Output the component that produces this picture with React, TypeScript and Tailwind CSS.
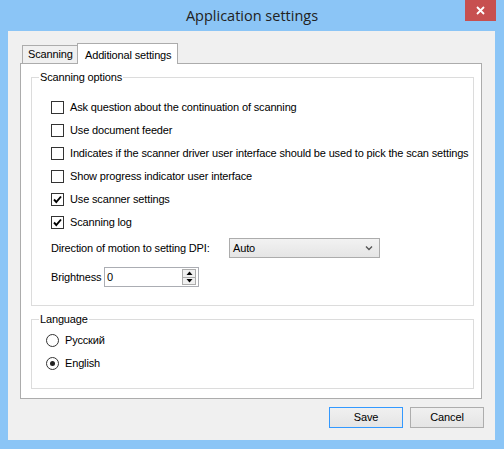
import React from "react";

function Check({ checked }: { checked?: boolean }) {
  return (
    <div className="w-[13px] h-[13px] border border-[#333333] bg-white flex items-center justify-center shrink-0">
      {checked && (
        <svg width="11" height="11" viewBox="0 0 11 11">
          <polyline points="2,5.5 4.3,8 9,2.5" fill="none" stroke="#000" strokeWidth="1.9" />
        </svg>
      )}
    </div>
  );
}

function Radio({ checked }: { checked?: boolean }) {
  return (
    <div className="w-[13px] h-[13px] rounded-full border border-[#333333] bg-white flex items-center justify-center shrink-0">
      {checked && <div className="w-[5px] h-[5px] rounded-full bg-[#222]" />}
    </div>
  );
}

function CheckRow({ label, checked }: { label: string; checked?: boolean }) {
  return (
    <div className="h-[23px] flex items-center gap-[6px]">
      <Check checked={checked} />
      <span className="whitespace-nowrap">{label}</span>
    </div>
  );
}

export default function App() {
  return (
    <div className="w-[504px] h-[449px] bg-[#8bc5f6] flex flex-col font-['Liberation_Sans',Arial,sans-serif] text-[11px] tracking-[-0.15px] text-black">
      <div className="h-[31px] relative flex items-center justify-center">
        <span className="font-['Open_Sans','Noto_Sans',sans-serif] text-[14.5px] tracking-normal text-[#222] mt-[1px]">Application settings</span>
        <div className="absolute right-[8px] top-0 w-[31px] h-[21px] bg-[#c75050] flex items-center justify-center">
          <svg width="9" height="9" viewBox="0 0 9 9">
            <path d="M1 1 L8 8 M8 1 L1 8" stroke="#fff" strokeWidth="1.8" />
          </svg>
        </div>
      </div>
      <div className="ml-[8px] w-[487px] h-[409px] bg-[#f0f0f0] flex flex-col">
        <div className="pt-[12px] pl-[12px] flex flex-col">
          <div className="flex items-end ml-[2px]">
            <div className="w-[56px] h-[18px] mt-[2px] border border-b-0 border-[#acacac] bg-[#f0f0f0] flex items-center pl-[5px]">
              Scanning
            </div>
            <div className="relative z-10 -ml-px -mb-px w-[101px] h-[21px] border border-b-0 border-[#acacac] bg-white flex items-start pt-[3px] pl-[7px]">
              Additional settings
            </div>
          </div>
          <div className="w-[462px] h-[336px] border border-[#acacac] bg-white flex flex-col">
            <div className="relative ml-[10px] mt-[13px] w-[443px] h-[229px] border border-[#dcdcdc] flex flex-col pl-[19px] pt-[18px]">
              <span className="absolute left-[7px] top-[-7px] bg-white px-px leading-[13px]">Scanning options</span>
              <CheckRow label="Ask question about the continuation of scanning" />
              <CheckRow label="Use document feeder" />
              <CheckRow label="Indicates if the scanner driver user interface should be used to pick the scan settings" />
              <CheckRow label="Show progress indicator user interface" />
              <CheckRow label="Use scanner settings" checked />
              <CheckRow label="Scanning log" checked />
              <div className="mt-[4px] h-[20px] flex items-center">
                <span className="w-[178px] whitespace-nowrap">Direction of motion to setting DPI:</span>
                <div className="w-[151px] h-[20px] border border-[#acacac] bg-gradient-to-b from-[#f2f2f2] to-[#e5e5e5] flex items-center justify-between pl-[3px] pr-[6px]">
                  <span>Auto</span>
                  <svg width="8" height="6" viewBox="0 0 8 6">
                    <polyline points="1,1.5 4,4.5 7,1.5" fill="none" stroke="#555" strokeWidth="1.4" />
                  </svg>
                </div>
              </div>
              <div className="mt-[9px] h-[20px] flex items-center">
                <span className="w-[53px] whitespace-nowrap">Brightness</span>
                <div className="w-[95px] h-[20px] border border-[#abadb3] bg-white flex items-center justify-between pl-[2px] pr-[2px]">
                  <span>0</span>
                  <div className="w-[14px] h-[16px] border border-[#acacac] bg-[#f0f0f0] flex flex-col">
                    <div className="flex-1 flex items-center justify-center border-b border-[#acacac]">
                      <svg width="7" height="4" viewBox="0 0 7 4"><polygon points="0.5,4 3.5,0.5 6.5,4" fill="#000" /></svg>
                    </div>
                    <div className="flex-1 flex items-center justify-center">
                      <svg width="7" height="4" viewBox="0 0 7 4"><polygon points="0.5,0 3.5,3.5 6.5,0" fill="#000" /></svg>
                    </div>
                  </div>
                </div>
              </div>
            </div>
            <div className="relative ml-[10px] mt-[13px] w-[443px] h-[70px] border border-[#dcdcdc] flex flex-col pl-[14px] pt-[9px]">
              <span className="absolute left-[7px] top-[-7px] bg-white px-px leading-[13px]">Language</span>
              <div className="h-[23px] flex items-center gap-[6px]">
                <Radio />
                <span>Русский</span>
              </div>
              <div className="h-[23px] flex items-center gap-[6px]">
                <Radio checked />
                <span>English</span>
              </div>
            </div>
          </div>
        </div>
        <div className="mt-[8px] flex justify-end gap-[7px] pr-[11px]">
          <div className="w-[74px] h-[21px] border border-[#3399ff] bg-gradient-to-b from-[#f0f0f0] to-[#e5e5e5] flex items-center justify-center">
            Save
          </div>
          <div className="w-[74px] h-[21px] border border-[#adadad] bg-gradient-to-b from-[#f0f0f0] to-[#e5e5e5] flex items-center justify-center">
            Cancel
          </div>
        </div>
      </div>
    </div>
  );
}
